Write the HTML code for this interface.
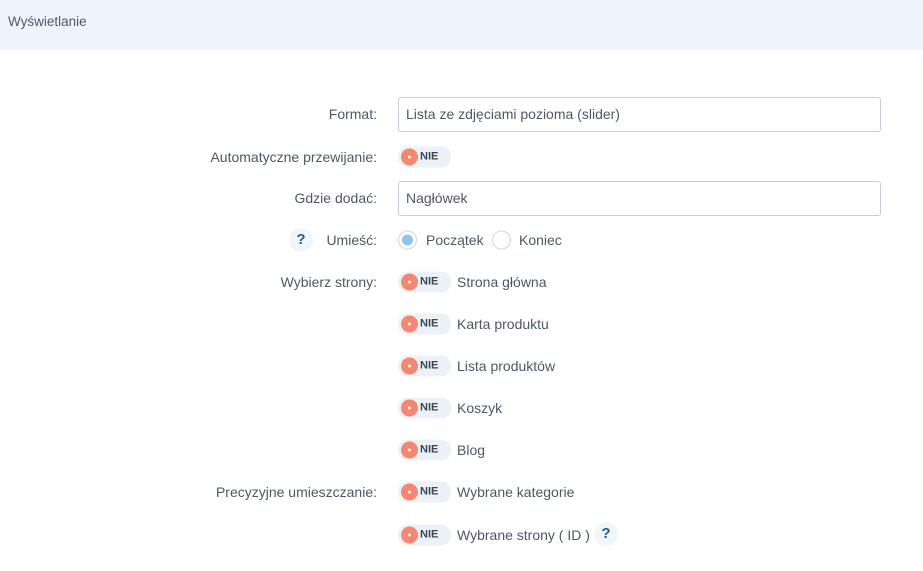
<!DOCTYPE html>
<html><head><meta charset="utf-8"><style>
body{margin:0;width:923px;height:571px;background:#fff;font-family:"Liberation Sans",sans-serif;font-size:14px;color:#4d5866;position:relative;overflow:hidden}
.hd{position:absolute;left:0;top:0;width:923px;height:50px;background:#edf4fb}
.hd span{position:absolute;left:8px;top:14px;font-size:13.5px;color:#505a66}
.lbl{position:absolute;right:546px;transform:translateY(-50%);white-space:nowrap}
.inp{position:absolute;left:398px;width:483px;height:35px;border:1px solid #c8cbe0;border-radius:3px;box-sizing:border-box;padding:8px 7px;color:#4d5866}
.tg{position:absolute;left:398px;width:53px;height:21px;border-radius:10px;background:#ecf1f7;transform:translateY(-50%)}
.tg i{position:absolute;left:3px;top:2px;width:17px;height:17px;border-radius:50%;background:#f5866f}
.tg i:after{content:"";position:absolute;left:7px;top:7px;width:3px;height:3px;border-radius:50%;background:#fff}
.tg b{position:absolute;left:22px;top:4px;font-size:11px;color:#3c4653}
.tx{position:absolute;left:457px;transform:translateY(-50%);white-space:nowrap}
.q{position:absolute;color:#1f5d8e;font-weight:bold;font-size:15px;transform:translateY(-50%);width:24px;height:24px;border-radius:50%;background:#f1f6fb;text-align:center;line-height:24px}
.rd{position:absolute;width:19px;height:19px;border-radius:50%;border:1px solid #cfd5e0;box-sizing:border-box;transform:translateY(-50%);background:#fff}
</style></head><body>
<div class="hd"><span>Wyświetlanie</span></div>
<div class="lbl" style="top:114px">Format:</div>
<div class="inp" style="top:97px">Lista ze zdjęciami pozioma (slider)</div>
<div class="lbl" style="top:157px">Automatyczne przewijanie:</div>
<div class="tg" style="top:157px"><i></i><b>NIE</b></div>
<div class="lbl" style="top:198px">Gdzie dodać:</div>
<div class="inp" style="top:181px">Nagłówek</div>
<div class="q" style="left:289px;top:240px">?</div>
<div class="lbl" style="top:240px">Umieść:</div>
<div class="rd" style="left:398px;top:240px"><span style="position:absolute;left:3px;top:3px;width:11px;height:11px;border-radius:50%;background:#8ec4ee"></span></div>
<div class="tx" style="left:426px;top:240px">Początek</div>
<div class="rd" style="left:492px;top:240px"></div>
<div class="tx" style="left:519px;top:240px">Koniec</div>
<div class="lbl" style="top:282px">Wybierz strony:</div>
<div class="tg" style="top:282px"><i></i><b>NIE</b></div><div class="tx" style="top:282px">Strona główna</div>
<div class="tg" style="top:324px"><i></i><b>NIE</b></div><div class="tx" style="top:324px">Karta produktu</div>
<div class="tg" style="top:366px"><i></i><b>NIE</b></div><div class="tx" style="top:366px">Lista produktów</div>
<div class="tg" style="top:408px"><i></i><b>NIE</b></div><div class="tx" style="top:408px">Koszyk</div>
<div class="tg" style="top:450px"><i></i><b>NIE</b></div><div class="tx" style="top:450px">Blog</div>
<div class="lbl" style="top:492px">Precyzyjne umieszczanie:</div>
<div class="tg" style="top:492px"><i></i><b>NIE</b></div><div class="tx" style="top:492px">Wybrane kategorie</div>
<div class="tg" style="top:535px"><i></i><b>NIE</b></div><div class="tx" style="top:535px">Wybrane strony ( ID )</div>
<div class="q" style="left:594px;top:534px">?</div>
</body></html>
